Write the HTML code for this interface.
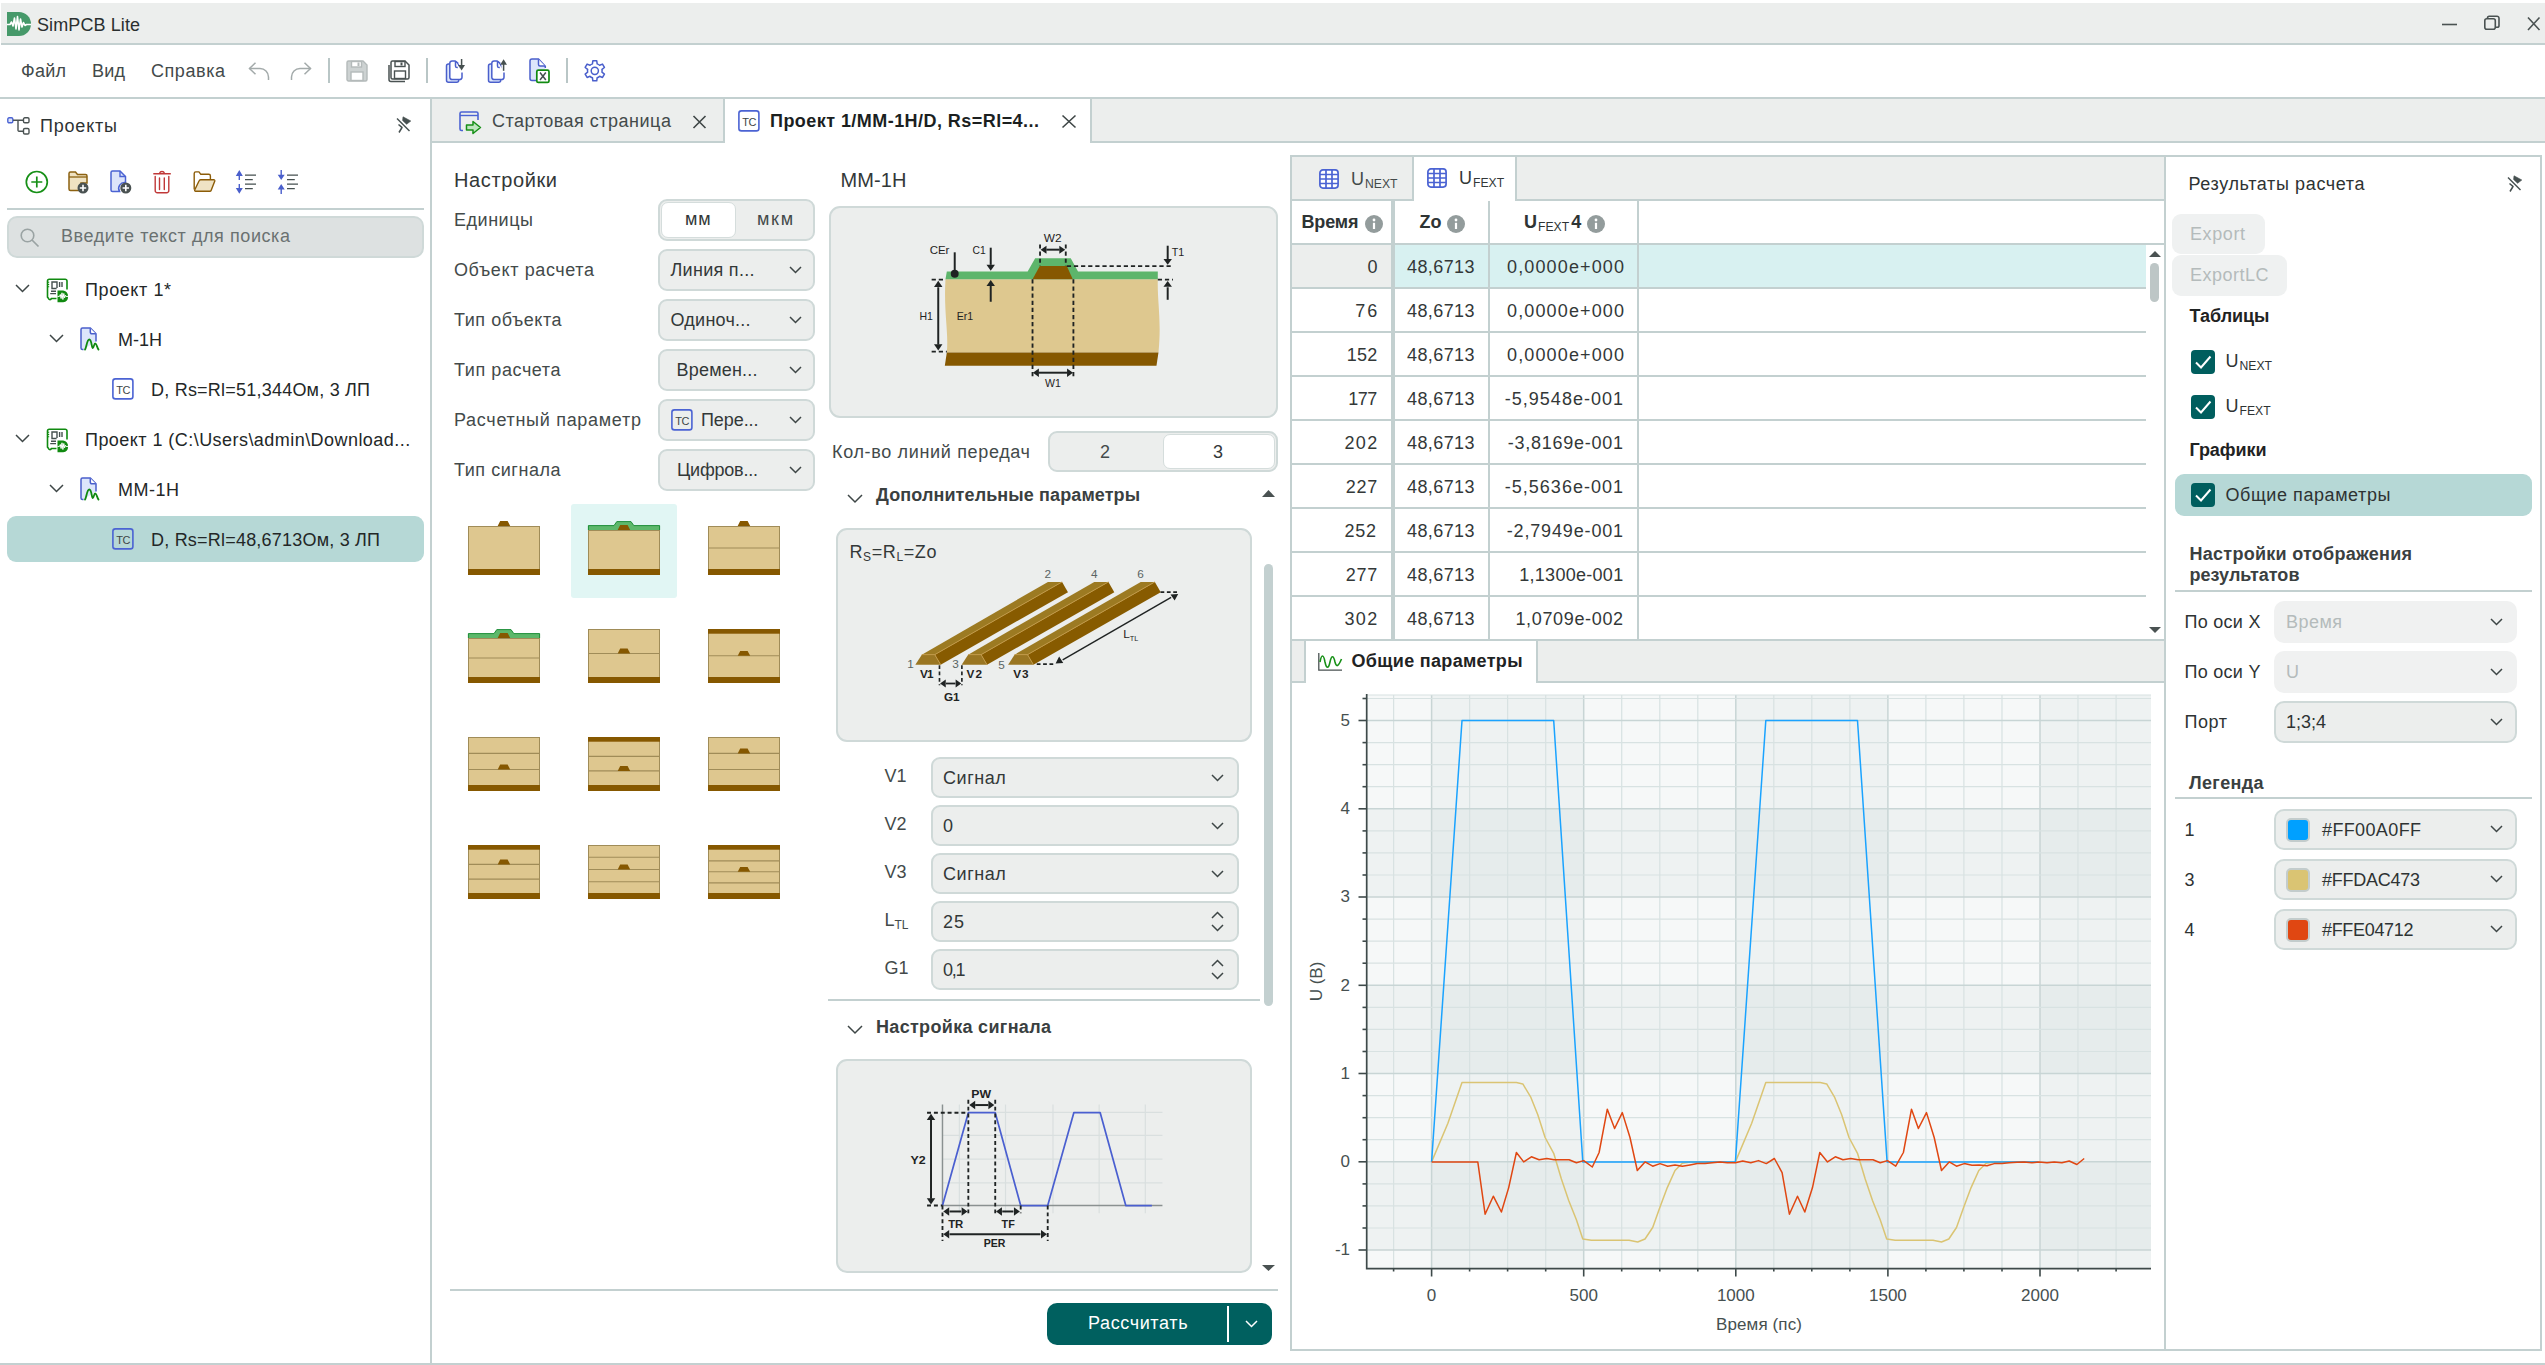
<!DOCTYPE html>
<html><head><meta charset="utf-8">
<style>
*{box-sizing:border-box;margin:0;padding:0}
html,body{width:2545px;height:1365px;overflow:hidden;background:#fff}
body{position:relative;font-family:"Liberation Sans",sans-serif;color:#232727;font-size:18px}
.a{position:absolute}
.t{position:absolute;white-space:nowrap;line-height:1}
.bd{background:#c3d0d0}
.gray{background:#eceeed}
svg{position:absolute;overflow:visible}
.dd{position:absolute;background:#eceeed;border:2px solid #cfd9d8;border-radius:9px}
.b{font-weight:bold}
</style></head><body>
<!-- ============ CHROME ============ -->
<div class="a gray" style="left:1px;top:3px;width:2544px;height:40px"></div>
<div class="a bd" style="left:1px;top:43px;width:2544px;height:2px"></div>
<div class="a bd" style="left:0;top:97px;width:2545px;height:2px"></div>
<div class="a bd" style="left:430px;top:99px;width:2px;height:1266px"></div>
<div class="a bd" style="left:0;top:1363px;width:2545px;height:2px"></div>

<!-- logo -->
<svg style="left:7px;top:12px" width="24" height="24" viewBox="0 0 24 24">
<path d="M0 0H12A12 12 0 0 1 12 24H0Z" fill="#46996a"></path>
<path d="M0 12.5H3L4.5 10L6 14L7.5 6L9 17L10.5 4.5L12 18L13.5 7L15 15L16.5 10.5L18 13.5L19.5 12.5H24" fill="none" stroke="#fff" stroke-width="1.6" stroke-linejoin="round"></path>
</svg>
<div class="t" style="left: 37px; top: 16px; font-size: 18px; color: rgb(42, 47, 47); letter-spacing: 0.1px;">SimPCB Lite</div>

<!-- window controls -->
<svg style="left:2440px;top:14px" width="104" height="20" viewBox="0 0 104 20">
<path d="M2 10.5H17" stroke="#4a5252" stroke-width="1.6"></path>
<rect x="44.8" y="4.8" width="10.5" height="10.5" rx="2" fill="none" stroke="#4a5252" stroke-width="1.6"></rect>
<path d="M47.5 4.8V4A1.8 1.8 0 0 1 49.3 2.2H57A2 2 0 0 1 59 4.2V11.5A1.8 1.8 0 0 1 57.2 13.3H55.3" fill="none" stroke="#4a5252" stroke-width="1.6"></path>
<path d="M88 3.5L99.5 16M99.5 3.5L88 16" stroke="#4a5252" stroke-width="1.6"></path>
</svg>

<!-- ============ MENU ============ -->
<div class="t" style="left: 21px; top: 62px; color: rgb(67, 74, 74); letter-spacing: 0.24px;">Файл</div>
<div class="t" style="left: 92px; top: 62px; color: rgb(67, 74, 74); letter-spacing: 0.21px;">Вид</div>
<div class="t" style="left: 151px; top: 62px; color: rgb(67, 74, 74); letter-spacing: 0.56px;">Справка</div>
<!-- undo/redo -->
<svg style="left:248px;top:62px" width="22" height="18" viewBox="0 0 22 18">
<path d="M1.5 6.5H12A8.5 8.5 0 0 1 20.5 15V18" fill="none" stroke="#a3aaaa" stroke-width="1.5"></path>
<path d="M7.5 0.8L1.5 6.5L7.5 12.2" fill="none" stroke="#a3aaaa" stroke-width="1.5"></path>
</svg>
<svg style="left:290px;top:62px" width="22" height="18" viewBox="0 0 22 18">
<path d="M20.5 6.5H10A8.5 8.5 0 0 0 1.5 15V18" fill="none" stroke="#a3aaaa" stroke-width="1.5"></path>
<path d="M14.5 0.8L20.5 6.5L14.5 12.2" fill="none" stroke="#a3aaaa" stroke-width="1.5"></path>
</svg>
<div class="a" style="left:328px;top:58px;width:2px;height:25px;background:#b9c6c6"></div>
<div class="a" style="left:426px;top:58px;width:2px;height:25px;background:#b9c6c6"></div>
<div class="a" style="left:566px;top:58px;width:2px;height:25px;background:#b9c6c6"></div>
<!-- save disabled -->
<svg style="left:346px;top:60px" width="22" height="22" viewBox="0 0 22 22">
<path d="M2.5 1H17L21 5V19.5A1.5 1.5 0 0 1 19.5 21H2.5A1.5 1.5 0 0 1 1 19.5V2.5A1.5 1.5 0 0 1 2.5 1Z" fill="#cdd2d2" stroke="#b4baba" stroke-width="1.4"></path>
<rect x="5.5" y="1.5" width="10" height="5.5" fill="#fff" stroke="#b4baba" stroke-width="1.4"></rect>
<rect x="11.5" y="2.5" width="2" height="3.5" fill="#b4baba"></rect>
<rect x="5" y="12" width="12" height="8.5" fill="#fff" stroke="#b4baba" stroke-width="1.4"></rect>
</svg>
<!-- save all -->
<svg style="left:388px;top:60px" width="22" height="22" viewBox="0 0 22 22">
<path d="M4.5 1H17L21 5V17.5A1.5 1.5 0 0 1 19.5 19H4.5A1.5 1.5 0 0 1 3 17.5V2.5A1.5 1.5 0 0 1 4.5 1Z" fill="#fff" stroke="#4a5252" stroke-width="1.5"></path>
<path d="M1 5V19.5A2 2 0 0 0 3 21.5H17" fill="none" stroke="#4a5252" stroke-width="1.5"></path>
<rect x="7" y="1.5" width="10" height="5" fill="#fff" stroke="#4a5252" stroke-width="1.4"></rect>
<rect x="12.5" y="2.5" width="2" height="3" fill="#4a5252"></rect>
<rect x="6.5" y="11" width="11" height="7.5" fill="#fff" stroke="#4a5252" stroke-width="1.4"></rect>
</svg>
<!-- import -->
<svg style="left:440px;top:55px" width="30" height="30" viewBox="0 0 30 30">
<rect x="6.5" y="9" width="12.2" height="18.3" rx="2" fill="#dde6fb" stroke="#4a5fcc" stroke-width="1.5"></rect>
<path d="M15.8 6H12A2.2 2.2 0 0 0 9.8 8.2V22.3A2.2 2.2 0 0 0 12 24.5H19.8A2.2 2.2 0 0 0 22 22.3V17.5" fill="#fff" stroke="#4a5fcc" stroke-width="1.5"></path>
<path d="M15.8 6.3L18.3 8.6M15.5 6V11A1.6 1.6 0 0 0 17.1 12.6H17.8" fill="none" stroke="#4a5fcc" stroke-width="1.5"></path>
<path d="M21.6 4V11" stroke="#465050" stroke-width="1.5"></path><path d="M18.2 10H25L21.6 15.5Z" fill="#465050"></path>
</svg>
<!-- export -->
<svg style="left:482px;top:55px" width="30" height="30" viewBox="0 0 30 30">
<rect x="6.5" y="9" width="12.2" height="18.3" rx="2" fill="#dde6fb" stroke="#4a5fcc" stroke-width="1.5"></rect>
<path d="M15.8 6H12A2.2 2.2 0 0 0 9.8 8.2V22.3A2.2 2.2 0 0 0 12 24.5H19.8A2.2 2.2 0 0 0 22 22.3V17.5" fill="#fff" stroke="#4a5fcc" stroke-width="1.5"></path>
<path d="M15.8 6.3L18.3 8.6M15.5 6V11A1.6 1.6 0 0 0 17.1 12.6H17.8" fill="none" stroke="#4a5fcc" stroke-width="1.5"></path>
<path d="M21.6 9V15.8" stroke="#465050" stroke-width="1.5"></path><path d="M18.2 9.7H25L21.6 4.2Z" fill="#465050"></path>
</svg>
<!-- excel -->
<svg style="left:524px;top:55px" width="30" height="30" viewBox="0 0 30 30">
<path d="M14.3 25.5H8A2 2 0 0 1 6 23.5V6A2 2 0 0 1 8 4H14.5L21.3 11.2V13" fill="#dde6fb" stroke="#4a5fcc" stroke-width="1.5"></path>
<path d="M14.5 4.2V9.5A1.5 1.5 0 0 0 16 11H21" fill="#fff" stroke="#4a5fcc" stroke-width="1.5"></path>
<rect x="12.8" y="15.2" width="12.2" height="12.2" rx="1.5" fill="#fff" stroke="#108a10" stroke-width="1.7"></rect>
<path d="M16 17.5L21.8 25M21.8 17.5L16 25" stroke="#465050" stroke-width="1.5"></path>
</svg>
<!-- gear -->
<svg style="left:580px;top:55px" width="30" height="30" viewBox="0 0 30 30">
<path d="M12.42 8.90L12.85 5.79L16.75 5.79L17.18 8.90A7.3 7.3 0 0 1 19.59 10.29L22.50 9.11L24.44 12.48L21.97 14.41A7.3 7.3 0 0 1 21.97 17.19L24.44 19.12L22.50 22.49L19.59 21.31A7.3 7.3 0 0 1 17.18 22.70L16.75 25.81L12.85 25.81L12.42 22.70A7.3 7.3 0 0 1 10.01 21.31L7.10 22.49L5.16 19.12L7.63 17.19A7.3 7.3 0 0 1 7.63 14.41L5.16 12.48L7.10 9.11L10.01 10.29A7.3 7.3 0 0 1 12.42 8.90Z" fill="none" stroke="#4a5fcc" stroke-width="1.5" stroke-linejoin="round"></path>
<circle cx="14.8" cy="15.8" r="3.6" fill="none" stroke="#4a5fcc" stroke-width="1.5"></circle>
</svg>

<!-- ============ LEFT PANEL ============ -->
<svg style="left:7px;top:117px" width="23" height="18" viewBox="0 0 23 18">
<rect x="0.8" y="0.8" width="5" height="5" rx="1.3" fill="#dde4fa" stroke="#4b63d3" stroke-width="1.4"></rect>
<rect x="16.5" y="0.8" width="5.5" height="5" rx="1.3" fill="none" stroke="#4a5252" stroke-width="1.4"></rect>
<rect x="16.5" y="11.5" width="5.5" height="5.5" rx="1.3" fill="none" stroke="#4a5252" stroke-width="1.4"></rect>
<path d="M6 3.3H16.5M11 3.3V13A1 1 0 0 0 12 14.2H16.5" fill="none" stroke="#4a5252" stroke-width="1.4"></path>
</svg>
<div class="t" style="left: 40px; top: 117px; color: rgb(46, 51, 51); letter-spacing: 0.79px;">Проекты</div>
<svg style="left:396px;top:116px" width="17" height="18" viewBox="12 9.5 17 18"><path d="M13 12L25.5 24.5" stroke="#465050" stroke-width="1.4"></path><path d="M19 10.3L26.8 14.5L22.6 17.8L18.6 14Z" fill="#465050" stroke="#465050" stroke-width="0.6" stroke-linejoin="round"></path><path d="M14.5 18L18.5 21.3M18 21L15 26" stroke="#465050" stroke-width="1.5"></path></svg>
<!-- toolbar icons -->
<svg style="left:25px;top:170px" width="24" height="24" viewBox="0 0 24 24">
<circle cx="11.8" cy="12" r="10.5" fill="none" stroke="#179017" stroke-width="1.7"></circle>
<path d="M11.8 6.5V17.5M6.3 12H17.3" stroke="#179017" stroke-width="1.7"></path>
</svg>
<svg style="left:68px;top:171px" width="22" height="23" viewBox="0 0 22 23">
<path d="M1 2.5A1.5 1.5 0 0 1 2.5 1H7.5L9.5 3.5H17.5A1.5 1.5 0 0 1 19 5V12H13V19.5H2.5A1.5 1.5 0 0 1 1 18Z" fill="#efe2c2" stroke="#8c6212" stroke-width="1.5"></path>
<path d="M1 6H19" stroke="#8c6212" stroke-width="1.3"></path>
<circle cx="15" cy="17" r="5.5" fill="#4a5252"></circle>
<path d="M15 13.8V20.2M11.8 17H18.2" stroke="#fff" stroke-width="1.6"></path>
</svg>
<svg style="left:110px;top:170px" width="22" height="24" viewBox="0 0 22 24">
<path d="M2.5 1H10L15.5 6.5V12.5A6 6 0 0 0 9.5 21.5H2.5A1.5 1.5 0 0 1 1 20V2.5A1.5 1.5 0 0 1 2.5 1Z" fill="#dde4fa" stroke="#4b63d3" stroke-width="1.5"></path>
<path d="M10 1V6.5H15.5" fill="none" stroke="#4b63d3" stroke-width="1.4"></path>
<circle cx="15.8" cy="18" r="5.5" fill="#4a5252"></circle>
<path d="M15.8 14.8V21.2M12.6 18H19" stroke="#fff" stroke-width="1.6"></path>
</svg>
<svg style="left:148px;top:165px" width="156" height="35" viewBox="0 0 156 35">
<path d="M5.3 8.7H22.8M11.6 8.2A2.5 2.3 0 0 1 16.4 8.2" fill="none" stroke="#c03838" stroke-width="1.4"></path>
<path d="M7.2 11.5V25.5A2.2 2.2 0 0 0 9.4 27.8H18.6A2.2 2.2 0 0 0 20.8 25.5V11.5M11.5 13V24.5M16.3 13V24.5" fill="none" stroke="#c03838" stroke-width="1.4" stroke-linecap="round"></path>
<path d="M46.2 24.5V8.5A1.6 1.6 0 0 1 47.8 6.9H51L52.8 9.3H60.8A1.6 1.6 0 0 1 62.4 10.9V14.5" fill="#fff" stroke="#8c5c08" stroke-width="1.4" stroke-linejoin="round"></path>
<path d="M51 16A1.8 1.8 0 0 1 52.7 14.8H65.8A1 1 0 0 1 66.8 16L63.2 25.2A1.6 1.6 0 0 1 61.7 26.3H47.6A1 1 0 0 1 46.7 25Z" fill="#efe3c5" stroke="#8c5c08" stroke-width="1.4" stroke-linejoin="round"></path>
<path d="M91.3 10V15M91.3 19V24" stroke="#4a5fcc" stroke-width="1.4"></path>
<path d="M87.8 11H94.8L91.3 5ZM87.8 23H94.8L91.3 28.8Z" fill="#4a5fcc"></path>
<path d="M97 10.2H108M97 14.6H104.8M97 19.2H108M97 23.6H104.8" stroke="#465050" stroke-width="1.3"></path>
<path d="M133.2 5V10.5M133.2 24V29" stroke="#4a5fcc" stroke-width="1.4"></path>
<path d="M129.7 9.8H136.7L133.2 15ZM129.7 24.5H136.7L133.2 19Z" fill="#4a5fcc"></path>
<path d="M139 10.2H150M139 14.6H146.8M139 19.2H150M139 23.6H146.8" stroke="#465050" stroke-width="1.3"></path>
</svg>
<div class="a bd" style="left:7px;top:208px;width:417px;height:2px"></div>
<div class="a" style="left:7px;top:216px;width:417px;height:42px;background:#dde1e1;border:2px solid #cfd9d8;border-radius:10px"></div>
<svg style="left:20px;top:228px" width="20" height="20" viewBox="0 0 20 20">
<circle cx="7.5" cy="7.5" r="6.3" fill="none" stroke="#9aa3a3" stroke-width="1.6"></circle>
<path d="M12 12L18.5 18.5" stroke="#9aa3a3" stroke-width="1.7"></path>
</svg>
<div class="t" style="left: 61px; top: 227px; color: rgb(106, 113, 113); letter-spacing: 0.57px;">Введите текст для поиска</div>

<!-- tree -->
<svg style="left:15px;top:284px" width="15" height="9" viewBox="0 0 15 9"><path d="M1 1L7.5 7.5L14 1" fill="none" stroke="#3e4646" stroke-width="1.5"></path></svg>
<svg style="left:46px;top:278px" width="24" height="24" viewBox="0 0 24 24">
<path d="M10.5 20.5H5.2A1.2 1.2 0 0 1 4 21.7A1.5 1.5 0 0 1 2.5 20.3L1.8 19.6A1 1 0 0 1 1.5 18.9V3A1.8 1.8 0 0 1 3.3 1.2H19.2A1.8 1.8 0 0 1 21 3V11.5" fill="none" stroke="#108a10" stroke-width="1.6" stroke-linejoin="round"></path>
<path d="M1.5 4.3H3.2M1.5 6.5H3.2M1.5 8.7H3.2" stroke="#108a10" stroke-width="1.1"></path>
<path d="M10.6 10.5H6V4H11V10" fill="none" stroke="#465050" stroke-width="1.4"></path>
<path d="M13.6 4V9M16 4V9M5 13.2H10M4.2 15.6H10" stroke="#465050" stroke-width="1.4"></path>
<path d="M11.5 12.5H17.2A6 6 0 0 1 17.2 24.3H11.5Z" fill="#108a10"></path>
<path d="M11.5 18.4H13.5L14.3 16.5L15.1 20.5L16 14.8L16.9 21.5L17.8 15.5L18.6 19.8L19.4 17.3L20.1 18.4H23" fill="none" stroke="#fff" stroke-width="1"></path>
</svg>
<div class="t" style="left: 85px; top: 281px; letter-spacing: 0.59px;">Проект 1*</div>

<svg style="left:49px;top:334px" width="15" height="9" viewBox="0 0 15 9"><path d="M1 1L7.5 7.5L14 1" fill="none" stroke="#3e4646" stroke-width="1.5"></path></svg>
<svg style="left:79.5px;top:326.5px" width="20" height="24" viewBox="0 0 20 24">
<path d="M3.5 22.5H2.5A1.5 1.5 0 0 1 1 21V2.5A1.5 1.5 0 0 1 2.5 1H10.3L16 6.8V14.5" fill="#dde6fb" stroke="#4a5fcc" stroke-width="1.5"></path>
<path d="M10.3 1.2V5.3A1.5 1.5 0 0 0 11.8 6.8H15.8" fill="#fff" stroke="#4a5fcc" stroke-width="1.5"></path>
<path d="M5 22.5C6.5 21 6.8 12.5 9.3 12.5C11.8 12.5 11.5 21 12.8 21C14 21 13.8 16.5 15.2 16.5C16.8 16.5 17 21 18.5 22.5" fill="none" stroke="#108a10" stroke-width="1.8" stroke-linecap="round"></path>
</svg>
<div class="t" style="left: 118px; top: 331px; letter-spacing: 0px;">М-1Н</div>

<svg style="left:112px;top:378px" width="22" height="22" viewBox="0 0 22 22">
<rect x="0.9" y="0.9" width="20" height="20" rx="2.5" fill="none" stroke="#4b63d3" stroke-width="1.6"></rect>
<text x="11" y="15.5" font-family="Liberation Sans" font-size="11" fill="#3e4646" text-anchor="middle" letter-spacing="-0.6">TC</text>
</svg>
<div class="t" style="left: 151px; top: 381px; letter-spacing: 0.22px;">D, Rs=Rl=51,344Ом, 3 ЛП</div>

<svg style="left:15px;top:434px" width="15" height="9" viewBox="0 0 15 9"><path d="M1 1L7.5 7.5L14 1" fill="none" stroke="#3e4646" stroke-width="1.5"></path></svg>
<svg style="left:46px;top:428px" width="24" height="24" viewBox="0 0 24 24">
<path d="M10.5 20.5H5.2A1.2 1.2 0 0 1 4 21.7A1.5 1.5 0 0 1 2.5 20.3L1.8 19.6A1 1 0 0 1 1.5 18.9V3A1.8 1.8 0 0 1 3.3 1.2H19.2A1.8 1.8 0 0 1 21 3V11.5" fill="none" stroke="#108a10" stroke-width="1.6" stroke-linejoin="round"></path>
<path d="M1.5 4.3H3.2M1.5 6.5H3.2M1.5 8.7H3.2" stroke="#108a10" stroke-width="1.1"></path>
<path d="M10.6 10.5H6V4H11V10" fill="none" stroke="#465050" stroke-width="1.4"></path>
<path d="M13.6 4V9M16 4V9M5 13.2H10M4.2 15.6H10" stroke="#465050" stroke-width="1.4"></path>
<path d="M11.5 12.5H17.2A6 6 0 0 1 17.2 24.3H11.5Z" fill="#108a10"></path>
<path d="M11.5 18.4H13.5L14.3 16.5L15.1 20.5L16 14.8L16.9 21.5L17.8 15.5L18.6 19.8L19.4 17.3L20.1 18.4H23" fill="none" stroke="#fff" stroke-width="1"></path>
</svg>
<div class="t" style="left: 85px; top: 431px; letter-spacing: 0.45px;">Проект 1 (C:\Users\admin\Download...</div>

<svg style="left:49px;top:484px" width="15" height="9" viewBox="0 0 15 9"><path d="M1 1L7.5 7.5L14 1" fill="none" stroke="#3e4646" stroke-width="1.5"></path></svg>
<svg style="left:79.5px;top:476.5px" width="20" height="24" viewBox="0 0 20 24">
<path d="M3.5 22.5H2.5A1.5 1.5 0 0 1 1 21V2.5A1.5 1.5 0 0 1 2.5 1H10.3L16 6.8V14.5" fill="#dde6fb" stroke="#4a5fcc" stroke-width="1.5"></path>
<path d="M10.3 1.2V5.3A1.5 1.5 0 0 0 11.8 6.8H15.8" fill="#fff" stroke="#4a5fcc" stroke-width="1.5"></path>
<path d="M5 22.5C6.5 21 6.8 12.5 9.3 12.5C11.8 12.5 11.5 21 12.8 21C14 21 13.8 16.5 15.2 16.5C16.8 16.5 17 21 18.5 22.5" fill="none" stroke="#108a10" stroke-width="1.8" stroke-linecap="round"></path>
</svg>
<div class="t" style="left: 118px; top: 481px; letter-spacing: 0.5px;">ММ-1Н</div>

<div class="a" style="left:7px;top:516px;width:417px;height:46px;background:#b6d8d6;border-radius:9px"></div>
<svg style="left:112px;top:528px" width="22" height="22" viewBox="0 0 22 22">
<rect x="0.9" y="0.9" width="20" height="20" rx="2.5" fill="none" stroke="#4b63d3" stroke-width="1.6"></rect>
<text x="11" y="15.5" font-family="Liberation Sans" font-size="11" fill="#3e4646" text-anchor="middle" letter-spacing="-0.6">TC</text>
</svg>
<div class="t" style="left: 151px; top: 531px; letter-spacing: 0.21px;">D, Rs=Rl=48,6713Ом, 3 ЛП</div>


<!-- ============ TAB BAR ============ -->
<div class="a gray" style="left:432px;top:99px;width:2113px;height:42px"></div>
<div class="a bd" style="left:432px;top:141px;width:2113px;height:2px"></div>
<div class="a bd" style="left:723px;top:99px;width:2px;height:44px"></div>
<div class="a" style="left:725px;top:99px;width:365px;height:44px;background:#fff"></div>
<div class="a bd" style="left:1090px;top:99px;width:2px;height:44px"></div>
<svg style="left:459px;top:111px" width="25" height="23" viewBox="0 0 25 23">
<path d="M4 19.5H2.5A1.5 1.5 0 0 1 1 18V2.5A1.5 1.5 0 0 1 2.5 1H17.5A1.5 1.5 0 0 1 19 2.5V9" fill="none" stroke="#4b63d3" stroke-width="1.6"></path>
<path d="M1 4.5H19" stroke="#4b63d3" stroke-width="1.4"></path>
<path d="M7.5 14H14V10.5L21.5 16.5L14 22.5V19H7.5Z" fill="#bfe6bf" stroke="#179017" stroke-width="1.5" stroke-linejoin="round"></path>
</svg>
<div class="t" style="left: 492px; top: 112px; color: rgb(67, 74, 74); letter-spacing: 0.5px;">Стартовая страница</div>
<svg style="left:692px;top:115px" width="15" height="14" viewBox="0 0 15 14"><path d="M1.5 1L13.5 13M13.5 1L1.5 13" stroke="#3e4646" stroke-width="1.6"></path></svg>
<svg style="left:738px;top:110px" width="22" height="22" viewBox="0 0 22 22">
<rect x="0.9" y="0.9" width="20" height="20" rx="2.5" fill="none" stroke="#4b63d3" stroke-width="1.6"></rect>
<text x="11" y="15.5" font-family="Liberation Sans" font-size="11" fill="#3e4646" text-anchor="middle" letter-spacing="-0.6">TC</text>
</svg>
<div class="t b" style="left: 770px; top: 112px; color: rgb(27, 31, 31); letter-spacing: 0.45px;">Проект 1/MM-1H/D, Rs=Rl=4...</div>
<svg style="left:1061px;top:114px" width="16" height="15" viewBox="0 0 16 15"><path d="M1.5 1.5L14.5 13.5M14.5 1.5L1.5 13.5" stroke="#3e4646" stroke-width="1.6"></path></svg>


<!--MIDSTART-->
<!-- ============ MIDDLE ============ -->
<div class="t " style="left: 454px; top: 169.5px; font-size: 20px; color: rgb(51, 56, 56); letter-spacing: 0.62px;">Настройки</div>
<div class="t " style="left: 840.5px; top: 170px; font-size: 20px; color: rgb(51, 56, 56); letter-spacing: 0.11px;">MM-1H</div>
<div class="t " style="left: 454px; top: 211px; color: rgb(67, 74, 74); letter-spacing: 0.53px;">Единицы</div>
<div class="t " style="left: 454px; top: 260.6px; color: rgb(67, 74, 74); letter-spacing: 0.62px;">Объект расчета</div>
<div class="t " style="left: 454px; top: 310.6px; color: rgb(67, 74, 74); letter-spacing: 0.54px;">Тип объекта</div>
<div class="t " style="left: 454px; top: 360.6px; color: rgb(67, 74, 74); letter-spacing: 0.58px;">Тип расчета</div>
<div class="t " style="left: 454px; top: 410.6px; color: rgb(67, 74, 74); letter-spacing: 0.7px;">Расчетный параметр</div>
<div class="t " style="left: 454px; top: 461px; color: rgb(67, 74, 74); letter-spacing: 0.54px;">Тип сигнала</div>
<div class="dd" style="left:658px;top:199px;width:157px;height:42px"></div>
<div class="a" style="left:661px;top:202px;width:75px;height:36px;background:#fff;border:1px solid #d5dddc;border-radius:7px"></div>
<div class="t " style="left: 685px; top: 210px; color: rgb(51, 56, 56); letter-spacing: 0.75px;">мм</div>
<div class="t " style="left: 757px; top: 210px; color: rgb(67, 74, 74); letter-spacing: 1.69px;">мкм</div>
<div class="dd" style="left:658px;top:249px;width:157px;height:42px"></div>
<div class="t " style="left: 670.5px; top: 260.6px; color: rgb(51, 56, 56); letter-spacing: 0.29px;">Линия п...</div>
<svg style="left:789px;top:266px" width="13" height="8" viewBox="0 0 13 8"><path d="M1 1L6.5 6.5L12 1" fill="none" stroke="#3e4646" stroke-width="1.5"></path></svg>
<div class="dd" style="left:658px;top:299px;width:157px;height:42px"></div>
<div class="t " style="left: 670.5px; top: 310.6px; color: rgb(51, 56, 56); letter-spacing: 0.24px;">Одиноч...</div>
<svg style="left:789px;top:316px" width="13" height="8" viewBox="0 0 13 8"><path d="M1 1L6.5 6.5L12 1" fill="none" stroke="#3e4646" stroke-width="1.5"></path></svg>
<div class="dd" style="left:658px;top:349px;width:157px;height:42px"></div>
<div class="t " style="left: 676.5px; top: 360.6px; color: rgb(51, 56, 56); letter-spacing: 0.21px;">Времен...</div>
<svg style="left:789px;top:366px" width="13" height="8" viewBox="0 0 13 8"><path d="M1 1L6.5 6.5L12 1" fill="none" stroke="#3e4646" stroke-width="1.5"></path></svg>
<div class="dd" style="left:658px;top:399px;width:157px;height:42px"></div>
<div class="t " style="left: 701px; top: 410.6px; color: rgb(51, 56, 56); letter-spacing: -0.08px;">Пере...</div>
<svg style="left:789px;top:416px" width="13" height="8" viewBox="0 0 13 8"><path d="M1 1L6.5 6.5L12 1" fill="none" stroke="#3e4646" stroke-width="1.5"></path></svg>
<div class="dd" style="left:658px;top:449px;width:157px;height:42px"></div>
<div class="t " style="left: 677px; top: 460.6px; color: rgb(51, 56, 56); letter-spacing: -0.22px;">Цифров...</div>
<svg style="left:789px;top:466px" width="13" height="8" viewBox="0 0 13 8"><path d="M1 1L6.5 6.5L12 1" fill="none" stroke="#3e4646" stroke-width="1.5"></path></svg>
<svg style="left:671px;top:409px" width="22" height="22" viewBox="0 0 22 22"><rect x="0.9" y="0.9" width="20" height="20" rx="2.5" fill="none" stroke="#4b63d3" stroke-width="1.6"></rect><text x="11" y="15.5" font-family="Liberation Sans" font-size="11" fill="#3e4646" text-anchor="middle" letter-spacing="-0.6">TC</text></svg>
<div class="a" style="left:571px;top:504px;width:106px;height:94px;background:#e1f6f4;border-radius:3px"></div>
<svg style="left:468px;top:521px" width="72" height="54" viewBox="0 0 72 54"><rect x="0.5" y="5.5" width="71" height="43" fill="#dec78f" stroke="#a08c58" stroke-width="1"></rect><path d="M29.7 5L32.2 0.09999999999999964H39.6L42.2 5Z" fill="#865800"></path><rect x="0" y="48" width="72" height="6" fill="#865800"></rect></svg>
<svg style="left:588px;top:521px" width="72" height="54" viewBox="0 0 72 54"><rect x="0.5" y="9.5" width="71" height="39" fill="#dec78f" stroke="#a08c58" stroke-width="1"></rect><path d="M0 4.6H26L28.8 0.5H43L45.8 4.6H72V9H0Z" fill="#5db86b"></path><path d="M0.4 9V4.6H26L28.8 0.6H43L45.8 4.6H71.6V9" fill="none" stroke="#1f8f3a" stroke-width="1"></path><path d="M29.7 9L32.2 4.1H39.6L42.2 9Z" fill="#865800"></path><rect x="0" y="48" width="72" height="6" fill="#865800"></rect></svg>
<svg style="left:708px;top:521px" width="72" height="54" viewBox="0 0 72 54"><rect x="0.5" y="5.5" width="71" height="43" fill="#dec78f" stroke="#a08c58" stroke-width="1"></rect><path d="M0.5 27H71.5" stroke="#a08c58" stroke-width="1.1"></path><path d="M29.7 5L32.2 0.09999999999999964H39.6L42.2 5Z" fill="#865800"></path><rect x="0" y="48" width="72" height="6" fill="#865800"></rect></svg>
<svg style="left:468px;top:629px" width="72" height="54" viewBox="0 0 72 54"><rect x="0.5" y="9.5" width="71" height="39" fill="#dec78f" stroke="#a08c58" stroke-width="1"></rect><path d="M0.5 29H71.5" stroke="#a08c58" stroke-width="1.1"></path><path d="M0 4.6H26L28.8 0.5H43L45.8 4.6H72V9H0Z" fill="#5db86b"></path><path d="M0.4 9V4.6H26L28.8 0.6H43L45.8 4.6H71.6V9" fill="none" stroke="#1f8f3a" stroke-width="1"></path><path d="M29.7 9L32.2 4.1H39.6L42.2 9Z" fill="#865800"></path><rect x="0" y="48" width="72" height="6" fill="#865800"></rect></svg>
<svg style="left:588px;top:629px" width="72" height="54" viewBox="0 0 72 54"><rect x="0.5" y="0.5" width="71" height="48" fill="#dec78f" stroke="#a08c58" stroke-width="1"></rect><path d="M0.5 24.5H71.5" stroke="#a08c58" stroke-width="1.1"></path><path d="M29.7 24.5L32.2 19.6H39.6L42.2 24.5Z" fill="#865800"></path><rect x="0" y="48" width="72" height="6" fill="#865800"></rect></svg>
<svg style="left:708px;top:629px" width="72" height="54" viewBox="0 0 72 54"><rect x="0.5" y="0.5" width="71" height="48" fill="#dec78f" stroke="#a08c58" stroke-width="1"></rect><path d="M0.5 26.8H71.5" stroke="#a08c58" stroke-width="1.1"></path><rect x="0" y="0" width="72" height="4.7" fill="#865800"></rect><path d="M29.7 26.8L32.2 21.9H39.6L42.2 26.8Z" fill="#865800"></path><rect x="0" y="48" width="72" height="6" fill="#865800"></rect></svg>
<svg style="left:468px;top:737px" width="72" height="54" viewBox="0 0 72 54"><rect x="0.5" y="0.5" width="71" height="48" fill="#dec78f" stroke="#a08c58" stroke-width="1"></rect><path d="M0.5 16.4H71.5" stroke="#a08c58" stroke-width="1.1"></path><path d="M0.5 32.5H71.5" stroke="#a08c58" stroke-width="1.1"></path><path d="M29.7 32.5L32.2 27.6H39.6L42.2 32.5Z" fill="#865800"></path><rect x="0" y="48" width="72" height="6" fill="#865800"></rect></svg>
<svg style="left:588px;top:737px" width="72" height="54" viewBox="0 0 72 54"><rect x="0.5" y="0.5" width="71" height="48" fill="#dec78f" stroke="#a08c58" stroke-width="1"></rect><path d="M0.5 19.4H71.5" stroke="#a08c58" stroke-width="1.1"></path><path d="M0.5 33.9H71.5" stroke="#a08c58" stroke-width="1.1"></path><rect x="0" y="0" width="72" height="4.7" fill="#865800"></rect><path d="M29.7 33.9L32.2 29.0H39.6L42.2 33.9Z" fill="#865800"></path><rect x="0" y="48" width="72" height="6" fill="#865800"></rect></svg>
<svg style="left:708px;top:737px" width="72" height="54" viewBox="0 0 72 54"><rect x="0.5" y="0.5" width="71" height="48" fill="#dec78f" stroke="#a08c58" stroke-width="1"></rect><path d="M0.5 16.4H71.5" stroke="#a08c58" stroke-width="1.1"></path><path d="M0.5 32.5H71.5" stroke="#a08c58" stroke-width="1.1"></path><path d="M29.7 16.4L32.2 11.499999999999998H39.6L42.2 16.4Z" fill="#865800"></path><rect x="0" y="48" width="72" height="6" fill="#865800"></rect></svg>
<svg style="left:468px;top:845px" width="72" height="54" viewBox="0 0 72 54"><rect x="0.5" y="0.5" width="71" height="48" fill="#dec78f" stroke="#a08c58" stroke-width="1"></rect><path d="M0.5 19.4H71.5" stroke="#a08c58" stroke-width="1.1"></path><path d="M0.5 34.1H71.5" stroke="#a08c58" stroke-width="1.1"></path><rect x="0" y="0" width="72" height="4.7" fill="#865800"></rect><path d="M29.7 19.4L32.2 14.499999999999998H39.6L42.2 19.4Z" fill="#865800"></path><rect x="0" y="48" width="72" height="6" fill="#865800"></rect></svg>
<svg style="left:588px;top:845px" width="72" height="54" viewBox="0 0 72 54"><rect x="0.5" y="0.5" width="71" height="48" fill="#dec78f" stroke="#a08c58" stroke-width="1"></rect><path d="M0.5 12.3H71.5" stroke="#a08c58" stroke-width="1.1"></path><path d="M0.5 24.5H71.5" stroke="#a08c58" stroke-width="1.1"></path><path d="M0.5 36.7H71.5" stroke="#a08c58" stroke-width="1.1"></path><path d="M29.7 24.5L32.2 19.6H39.6L42.2 24.5Z" fill="#865800"></path><rect x="0" y="48" width="72" height="6" fill="#865800"></rect></svg>
<svg style="left:708px;top:845px" width="72" height="54" viewBox="0 0 72 54"><rect x="0.5" y="0.5" width="71" height="48" fill="#dec78f" stroke="#a08c58" stroke-width="1"></rect><path d="M0.5 15.9H71.5" stroke="#a08c58" stroke-width="1.1"></path><path d="M0.5 26.8H71.5" stroke="#a08c58" stroke-width="1.1"></path><path d="M0.5 37.9H71.5" stroke="#a08c58" stroke-width="1.1"></path><rect x="0" y="0" width="72" height="4.7" fill="#865800"></rect><path d="M29.7 26.8L32.2 21.9H39.6L42.2 26.8Z" fill="#865800"></path><rect x="0" y="48" width="72" height="6" fill="#865800"></rect></svg>
<div class="a" style="left:829px;top:206px;width:449px;height:212px;background:#eceeed;border:2px solid #cfd9d8;border-radius:11px"></div>
<svg style="left:900px;top:220px" width="300" height="180" viewBox="0 0 2275 1365"><path d="M345 450H1955C1950 620 1985 760 1960 1005H355C370 850 330 700 345 450Z" fill="#dec88f"></path><path d="M355 1005H1960L1945 1105H340Z" fill="#865800"></path><path d="M355 390H968L1025 290H1295L1350 390H1955V450H345Z" fill="#5db56b"></path><path d="M1005 450L1060 348H1265L1310 450Z" fill="#865800"></path><circle cx="415" cy="408" r="30" fill="#1f2323"></circle><path d="M415 245V400" stroke="#1f2323" stroke-width="15" fill="none"></path><path d="M688 210V340" stroke="#1f2323" stroke-width="15" fill="none"></path><path d="M656 340.0H720L688 385Z" fill="#1f2323"></path><path d="M688 500V620" stroke="#1f2323" stroke-width="15" fill="none"></path><path d="M656 500.0H720L688 455Z" fill="#1f2323"></path><path d="M1062 185V348M1257 185V348" stroke="#1f2323" stroke-width="14" stroke-dasharray="32 22" fill="none"></path><path d="M1110 225H1210" stroke="#1f2323" stroke-width="15" fill="none"></path><path d="M1111.0 195V255L1066 225Z" fill="#1f2323"></path><path d="M1208.0 195V255L1253 225Z" fill="#1f2323"></path><path d="M1265 350H2070M1955 452H2070" stroke="#1f2323" stroke-width="14" stroke-dasharray="32 22" fill="none"></path><path d="M2030 195V300" stroke="#1f2323" stroke-width="15" fill="none"></path><path d="M1998 295.0H2062L2030 340Z" fill="#1f2323"></path><path d="M2030 510V605" stroke="#1f2323" stroke-width="15" fill="none"></path><path d="M1998 507.0H2062L2030 462Z" fill="#1f2323"></path><path d="M240 452H345M240 998H355" stroke="#1f2323" stroke-width="14" stroke-dasharray="32 22" fill="none"></path><path d="M290 510V945" stroke="#1f2323" stroke-width="15" fill="none"></path><path d="M258 508.0H322L290 460Z" fill="#1f2323"></path><path d="M258 942.0H322L290 990Z" fill="#1f2323"></path><path d="M1005 450V1205M1315 450V1205" stroke="#1f2323" stroke-width="14" stroke-dasharray="32 22" fill="none"></path><path d="M1050 1158H1270" stroke="#1f2323" stroke-width="15" fill="none"></path><path d="M1053.0 1126V1190L1008 1158Z" fill="#1f2323"></path><path d="M1267.0 1126V1190L1312 1158Z" fill="#1f2323"></path><text x="225" y="255" font-family="Liberation Sans" font-size="86" fill="#1f2323" lengthAdjust="spacingAndGlyphs" textLength="150">CEr</text><text x="550" y="255" font-family="Liberation Sans" font-size="86" fill="#1f2323" lengthAdjust="spacingAndGlyphs" textLength="100">C1</text><text x="1090" y="170" font-family="Liberation Sans" font-size="86" fill="#1f2323" lengthAdjust="spacingAndGlyphs" textLength="135">W2</text><text x="2060" y="270" font-family="Liberation Sans" font-size="86" fill="#1f2323" lengthAdjust="spacingAndGlyphs" textLength="95">T1</text><text x="148" y="755" font-family="Liberation Sans" font-size="86" fill="#1f2323" lengthAdjust="spacingAndGlyphs" textLength="102">H1</text><text x="430" y="755" font-family="Liberation Sans" font-size="86" fill="#1f2323" lengthAdjust="spacingAndGlyphs" textLength="125">Er1</text><text x="1100" y="1270" font-family="Liberation Sans" font-size="86" fill="#1f2323" lengthAdjust="spacingAndGlyphs" textLength="120">W1</text></svg>
<div class="t " style="left: 832px; top: 442.5px; color: rgb(67, 74, 74); letter-spacing: 0.66px;">Кол-во линий передач</div>
<div class="dd" style="left:1048px;top:431px;width:230px;height:41px"></div>
<div class="a" style="left:1163px;top:434px;width:112px;height:35px;background:#fff;border:1px solid #d5dddc;border-radius:7px"></div>
<div class="t " style="left:1100px;top:442.5px;color:#434a4a">2</div>
<div class="t " style="left:1213px;top:442.5px;color:#333838">3</div>
<svg style="left:847px;top:494px" width="16" height="9" viewBox="0 0 16 9"><path d="M1 1L8 8L15 1" fill="none" stroke="#3e4646" stroke-width="1.5"></path></svg>
<div class="t b" style="left: 876px; top: 486px; color: rgb(58, 64, 64); letter-spacing: 0.11px;">Дополнительные параметры</div>
<svg style="left:1262px;top:490px" width="13" height="7" viewBox="0 0 13 7"><path d="M0 7L6.5 0L13 7Z" fill="#4a5252"></path></svg>
<div class="a" style="left:1264px;top:564px;width:9px;height:442px;background:#c3d0d0;border-radius:5px"></div>
<div class="a" style="left:836px;top:528px;width:416px;height:214px;background:#eceeed;border:2px solid #cfd9d8;border-radius:11px"></div>
<div class="t" style="left:849.5px;top:543px;color:#333838;font-size:18px;letter-spacing:0.6px">R<span style="font-size:12px;position:relative;top:3px">S</span>=R<span style="font-size:12px;position:relative;top:3px">L</span>=Zo</div>
<svg style="left:900px;top:555px" width="300" height="160" viewBox="0 0 2545 1357"><path d="M130 930L185 845H295L345 930Z" fill="#9a7622"></path><path d="M185 845L1255 228H1375L295 845Z" fill="#9c7a22"></path><path d="M295 845L1375 228L1425 315L345 930Z" fill="#875b00"></path><path d="M295 845L1375 228M185 845H295L345 930" stroke="#c29a48" stroke-width="8" fill="none"></path><path d="M523 930L578 845H688L738 930Z" fill="#9a7622"></path><path d="M578 845L1648 228H1768L688 845Z" fill="#9c7a22"></path><path d="M688 845L1768 228L1818 315L738 930Z" fill="#875b00"></path><path d="M688 845L1768 228M578 845H688L738 930" stroke="#c29a48" stroke-width="8" fill="none"></path><path d="M917 930L972 845H1082L1132 930Z" fill="#9a7622"></path><path d="M972 845L2042 228H2162L1082 845Z" fill="#9c7a22"></path><path d="M1082 845L2162 228L2212 315L1132 930Z" fill="#875b00"></path><path d="M1082 845L2162 228M972 845H1082L1132 930" stroke="#c29a48" stroke-width="8" fill="none"></path><path d="M1160 925H1320M2210 315H2370M335 935V1105M525 935V1105" stroke="#1f2323" stroke-width="14" stroke-dasharray="32 22" fill="none"></path><path d="M1380 890L2300 360" stroke="#1f2323" stroke-width="12"></path><path d="M1320 920L1385 915L1350 860Z M2360 330L2330 385L2295 335Z" fill="#1f2323"></path><path d="M390 1090H470" stroke="#1f2323" stroke-width="15" fill="none"></path><path d="M388.0 1056V1124L340 1090Z" fill="#1f2323"></path><path d="M472.0 1056V1124L520 1090Z" fill="#1f2323"></path><text x="62" y="958" font-family="Liberation Sans" font-size="100" fill="#5a6464">1</text><text x="1225" y="193" font-family="Liberation Sans" font-size="100" fill="#5a6464">2</text><text x="443" y="955" font-family="Liberation Sans" font-size="100" fill="#5a6464">3</text><text x="1620" y="193" font-family="Liberation Sans" font-size="100" fill="#5a6464">4</text><text x="833" y="963" font-family="Liberation Sans" font-size="100" fill="#5a6464">5</text><text x="2013" y="193" font-family="Liberation Sans" font-size="100" fill="#5a6464">6</text><text x="170" y="1045" font-family="Liberation Sans" font-size="100" font-weight="bold" fill="#1f2323" textLength="115">V1</text><text x="565" y="1045" font-family="Liberation Sans" font-size="100" font-weight="bold" fill="#1f2323" textLength="130">V2</text><text x="960" y="1045" font-family="Liberation Sans" font-size="100" font-weight="bold" fill="#1f2323" textLength="130">V3</text><text x="373" y="1238" font-family="Liberation Sans" font-size="100" font-weight="bold" fill="#1f2323">G1</text><text x="1893" y="705" font-family="Liberation Sans" font-size="100" fill="#1f2323">L<tspan font-size="62" dy="22">TL</tspan></text></svg>
<div class="t " style="left:884.5px;top:767px;color:#434a4a">V1</div>
<div class="dd" style="left:931px;top:757px;width:308px;height:41px"></div>
<div class="t " style="left: 943px; top: 768.5px; color: rgb(51, 56, 56); letter-spacing: 0.54px;">Сигнал</div>
<svg style="left:1211px;top:773.5px" width="13" height="8" viewBox="0 0 13 8"><path d="M1 1L6.5 6.5L12 1" fill="none" stroke="#3e4646" stroke-width="1.5"></path></svg>
<div class="t " style="left:884.5px;top:815px;color:#434a4a">V2</div>
<div class="dd" style="left:931px;top:805px;width:308px;height:41px"></div>
<div class="t " style="left:943px;top:816.5px;color:#333838">0</div>
<svg style="left:1211px;top:821.5px" width="13" height="8" viewBox="0 0 13 8"><path d="M1 1L6.5 6.5L12 1" fill="none" stroke="#3e4646" stroke-width="1.5"></path></svg>
<div class="t " style="left:884.5px;top:863px;color:#434a4a">V3</div>
<div class="dd" style="left:931px;top:853px;width:308px;height:41px"></div>
<div class="t " style="left: 943px; top: 864.5px; color: rgb(51, 56, 56); letter-spacing: 0.54px;">Сигнал</div>
<svg style="left:1211px;top:869.5px" width="13" height="8" viewBox="0 0 13 8"><path d="M1 1L6.5 6.5L12 1" fill="none" stroke="#3e4646" stroke-width="1.5"></path></svg>
<div class="t" style="left:884.5px;top:911px;color:#434a4a">L<span style="font-size:12px;position:relative;top:3px">TL</span></div>
<div class="dd" style="left:931px;top:901px;width:308px;height:41px"></div>
<div class="t " style="left: 943px; top: 912.5px; color: rgb(51, 56, 56); letter-spacing: 0.97px;">25</div>
<svg style="left:1211px;top:911px" width="13" height="21" viewBox="0 0 13 21"><path d="M1 7L6.5 1.5L12 7M1 14L6.5 19.5L12 14" fill="none" stroke="#3e4646" stroke-width="1.5"></path></svg>
<div class="t " style="left:884.5px;top:959px;color:#434a4a">G1</div>
<div class="dd" style="left:931px;top:949px;width:308px;height:41px"></div>
<div class="t " style="left: 943px; top: 960.5px; color: rgb(51, 56, 56); letter-spacing: -1.27px;">0,1</div>
<svg style="left:1211px;top:959px" width="13" height="21" viewBox="0 0 13 21"><path d="M1 7L6.5 1.5L12 7M1 14L6.5 19.5L12 14" fill="none" stroke="#3e4646" stroke-width="1.5"></path></svg>
<div class="a bd" style="left:828px;top:999px;width:432px;height:2px"></div>
<svg style="left:847px;top:1025px" width="16" height="9" viewBox="0 0 16 9"><path d="M1 1L8 8L15 1" fill="none" stroke="#3e4646" stroke-width="1.5"></path></svg>
<div class="t b" style="left: 876px; top: 1017.5px; color: rgb(58, 64, 64); letter-spacing: 0.32px;">Настройка сигнала</div>
<div class="a" style="left:836px;top:1059px;width:416px;height:214px;background:#eceeed;border:2px solid #cfd9d8;border-radius:11px"></div>
<svg style="left:900px;top:1080px" width="280" height="180" viewBox="0 0 2123 1365"><path d="M450 185V1010M800 185V1010M1160 185V1010M1510 185V1010M1860 185V1010M325 245H1990M325 420H1990M325 600H1990M325 780H1990" stroke="#d9dfdf" stroke-width="9"></path><path d="M322 185V952H1990" stroke="#8a9191" stroke-width="11" fill="none"></path><path d="M322 952L518 248H722L915 952H1120L1318 248H1518L1712 952H1910" stroke="#4a5fd0" stroke-width="13" fill="none" stroke-linejoin="round"></path><path d="M205 248H518M205 952H322M518 150V1010M722 150V1010M915 952V1010M322 952V1220M1120 952V1220" stroke="#1f2323" stroke-width="14" stroke-dasharray="30 22" fill="none"></path><path d="M235 300V900" stroke="#1f2323" stroke-width="15" fill="none"></path><path d="M203 303.0H267L235 255Z" fill="#1f2323"></path><path d="M203 897.0H267L235 945Z" fill="#1f2323"></path><path d="M570 190H670" stroke="#1f2323" stroke-width="15" fill="none"></path><path d="M570.0 158V222L525 190Z" fill="#1f2323"></path><path d="M670.0 158V222L715 190Z" fill="#1f2323"></path><path d="M375 997H465" stroke="#1f2323" stroke-width="15" fill="none"></path><path d="M373.0 965V1029L328 997Z" fill="#1f2323"></path><path d="M467.0 965V1029L512 997Z" fill="#1f2323"></path><path d="M775 997H860" stroke="#1f2323" stroke-width="15" fill="none"></path><path d="M773.0 965V1029L728 997Z" fill="#1f2323"></path><path d="M864.0 965V1029L909 997Z" fill="#1f2323"></path><path d="M375 1170H1065" stroke="#1f2323" stroke-width="15" fill="none"></path><path d="M373.0 1138V1202L328 1170Z" fill="#1f2323"></path><path d="M1069.0 1138V1202L1114 1170Z" fill="#1f2323"></path><text x="540" y="135" font-family="Liberation Sans" font-size="88" font-weight="bold" fill="#1f2323" lengthAdjust="spacingAndGlyphs" textLength="150">PW</text><text x="80" y="640" font-family="Liberation Sans" font-size="88" font-weight="bold" fill="#1f2323" lengthAdjust="spacingAndGlyphs" textLength="115">Y2</text><text x="365" y="1120" font-family="Liberation Sans" font-size="88" font-weight="bold" fill="#1f2323" lengthAdjust="spacingAndGlyphs" textLength="115">TR</text><text x="770" y="1120" font-family="Liberation Sans" font-size="88" font-weight="bold" fill="#1f2323" lengthAdjust="spacingAndGlyphs" textLength="100">TF</text><text x="635" y="1265" font-family="Liberation Sans" font-size="88" font-weight="bold" fill="#1f2323" lengthAdjust="spacingAndGlyphs" textLength="165">PER</text></svg>
<svg style="left:1262px;top:1265px" width="13" height="6" viewBox="0 0 13 6"><path d="M0 0L6.5 6L13 0Z" fill="#4a5252"></path></svg>
<div class="a bd" style="left:450px;top:1289px;width:828px;height:2px"></div>
<div class="a" style="left:1047px;top:1303px;width:225px;height:42px;background:#00605f;border-radius:10px"></div>
<div class="a" style="left:1227px;top:1306px;width:2px;height:36px;background:#fff"></div>
<div class="t " style="left: 1088px; top: 1313.6px; color: rgb(255, 255, 255); letter-spacing: 0.62px;">Рассчитать</div>
<svg style="left:1244.5px;top:1320px" width="13" height="8" viewBox="0 0 13 8"><path d="M1 1L6.5 6.5L12 1" fill="none" stroke="#fff" stroke-width="1.5"></path></svg>
<!--MIDEND-->

<!--TABSTART-->
<!-- ============ TABLE ============ -->
<div class="a" style="left:1290px;top:155px;width:876px;height:1196px;border:2px solid #c3d0d0"></div>
<div class="a gray" style="left:1292px;top:157px;width:872px;height:42px"></div>
<div class="a bd" style="left:1292px;top:199px;width:872px;height:2px"></div>
<div class="a bd" style="left:1412px;top:157px;width:2px;height:44px"></div>
<div class="a" style="left:1414px;top:157px;width:101px;height:44px;background:#fff"></div>
<div class="a bd" style="left:1515px;top:157px;width:2px;height:44px"></div>
<svg style="left:1319px;top:169px" width="20" height="20" viewBox="0 0 20 20"><rect x="0.9" y="0.9" width="18.2" height="18.2" rx="3" fill="#fff" stroke="#4b63d3" stroke-width="1.7"></rect><path d="M1 5.5H19M1 10H19M1 14.5H19M7 1V19M13 1V19" stroke="#4b63d3" stroke-width="1.7"></path></svg>
<div class="t" style="left:1351px;top:169.8px;color:#434a4a">U<span style="font-size:12.2px;position:relative;top:3px;left:1px">NEXT</span></div>
<svg style="left:1427px;top:168px" width="20" height="20" viewBox="0 0 20 20"><rect x="0.9" y="0.9" width="18.2" height="18.2" rx="3" fill="#fff" stroke="#4b63d3" stroke-width="1.7"></rect><path d="M1 5.5H19M1 10H19M1 14.5H19M7 1V19M13 1V19" stroke="#4b63d3" stroke-width="1.7"></path></svg>
<div class="t" style="left:1459px;top:168.8px;color:#333838">U<span style="font-size:12.2px;position:relative;top:3px;left:1px">FEXT</span></div>
<div class="t b" style="left: 1301.5px; top: 213px; color: rgb(46, 52, 52); letter-spacing: -0.15px;">Время</div>
<svg style="left:1365px;top:215px" width="18" height="18" viewBox="0 0 18 18"><circle cx="9" cy="9" r="9" fill="#939c9c"></circle><circle cx="9" cy="5" r="1.4" fill="#fff"></circle><path d="M9 7.8V14" stroke="#fff" stroke-width="2.2"></path></svg>
<div class="t b" style="left: 1419.5px; top: 213px; color: rgb(46, 52, 52); letter-spacing: 0px;">Zo</div>
<svg style="left:1447px;top:215px" width="18" height="18" viewBox="0 0 18 18"><circle cx="9" cy="9" r="9" fill="#939c9c"></circle><circle cx="9" cy="5" r="1.4" fill="#fff"></circle><path d="M9 7.8V14" stroke="#fff" stroke-width="2.2"></path></svg>
<div class="t b" style="left:1524px;top:213px;color:#2e3434">U<span style="font-size:12.2px;position:relative;top:3px;left:1px;font-weight:normal">FEXT</span><span style="margin-left:3px">4</span></div>
<svg style="left:1587px;top:215px" width="18" height="18" viewBox="0 0 18 18"><circle cx="9" cy="9" r="9" fill="#939c9c"></circle><circle cx="9" cy="5" r="1.4" fill="#fff"></circle><path d="M9 7.8V14" stroke="#fff" stroke-width="2.2"></path></svg>
<div class="a bd" style="left:1292px;top:243px;width:872px;height:2px"></div>
<div class="a gray" style="left:1292px;top:245px;width:99px;height:42px"></div>
<div class="a" style="left:1395px;top:245px;width:751px;height:42px;background:#d8f1f1"></div>
<div class="a bd" style="left:1292px;top:287px;width:854px;height:2px"></div>
<div class="t" style="left: 1367.4px; top: 258px; color: rgb(51, 56, 56); letter-spacing: 0px;">0</div>
<div class="t" style="left: 1407px; top: 258px; color: rgb(51, 56, 56); letter-spacing: 0.4px;">48,6713</div>
<div class="t" style="left: 1507px; top: 258px; color: rgb(51, 56, 56); letter-spacing: 1.14px;">0,0000e+000</div>
<div class="a bd" style="left:1292px;top:331px;width:854px;height:2px"></div>
<div class="t" style="left: 1355.2px; top: 302px; color: rgb(51, 56, 56); letter-spacing: 1.97px;">76</div>
<div class="t" style="left: 1407px; top: 302px; color: rgb(51, 56, 56); letter-spacing: 0.4px;">48,6713</div>
<div class="t" style="left: 1507px; top: 302px; color: rgb(51, 56, 56); letter-spacing: 1.14px;">0,0000e+000</div>
<div class="a bd" style="left:1292px;top:375px;width:854px;height:2px"></div>
<div class="t" style="left: 1346.8px; top: 346px; color: rgb(51, 56, 56); letter-spacing: 0.18px;">152</div>
<div class="t" style="left: 1407px; top: 346px; color: rgb(51, 56, 56); letter-spacing: 0.4px;">48,6713</div>
<div class="t" style="left: 1507px; top: 346px; color: rgb(51, 56, 56); letter-spacing: 1.14px;">0,0000e+000</div>
<div class="a bd" style="left:1292px;top:419px;width:854px;height:2px"></div>
<div class="t" style="left: 1348.3px; top: 390px; color: rgb(51, 56, 56); letter-spacing: -0.52px;">177</div>
<div class="t" style="left: 1407px; top: 390px; color: rgb(51, 56, 56); letter-spacing: 0.4px;">48,6713</div>
<div class="t" style="left: 1504.7px; top: 390px; color: rgb(51, 56, 56); letter-spacing: 1.03px;">-5,9548e-001</div>
<div class="a bd" style="left:1292px;top:463px;width:854px;height:2px"></div>
<div class="t" style="left: 1344.5px; top: 434px; color: rgb(51, 56, 56); letter-spacing: 1.33px;">202</div>
<div class="t" style="left: 1407px; top: 434px; color: rgb(51, 56, 56); letter-spacing: 0.4px;">48,6713</div>
<div class="t" style="left: 1507.8px; top: 434px; color: rgb(51, 56, 56); letter-spacing: 0.75px;">-3,8169e-001</div>
<div class="a bd" style="left:1292px;top:507px;width:854px;height:2px"></div>
<div class="t" style="left: 1345.7px; top: 478px; color: rgb(51, 56, 56); letter-spacing: 0.73px;">227</div>
<div class="t" style="left: 1407px; top: 478px; color: rgb(51, 56, 56); letter-spacing: 0.4px;">48,6713</div>
<div class="t" style="left: 1504.7px; top: 478px; color: rgb(51, 56, 56); letter-spacing: 1.03px;">-5,5636e-001</div>
<div class="a bd" style="left:1292px;top:551px;width:854px;height:2px"></div>
<div class="t" style="left: 1344.5px; top: 522px; color: rgb(51, 56, 56); letter-spacing: 0.73px;">252</div>
<div class="t" style="left: 1407px; top: 522px; color: rgb(51, 56, 56); letter-spacing: 0.4px;">48,6713</div>
<div class="t" style="left: 1506.7px; top: 522px; color: rgb(51, 56, 56); letter-spacing: 0.85px;">-2,7949e-001</div>
<div class="a bd" style="left:1292px;top:595px;width:854px;height:2px"></div>
<div class="t" style="left: 1345.7px; top: 566px; color: rgb(51, 56, 56); letter-spacing: 0.73px;">277</div>
<div class="t" style="left: 1407px; top: 566px; color: rgb(51, 56, 56); letter-spacing: 0.4px;">48,6713</div>
<div class="t" style="left: 1519.2px; top: 566px; color: rgb(51, 56, 56); letter-spacing: 0.29px;">1,1300e-001</div>
<div class="t" style="left: 1344.5px; top: 610px; color: rgb(51, 56, 56); letter-spacing: 1.33px;">302</div>
<div class="t" style="left: 1407px; top: 610px; color: rgb(51, 56, 56); letter-spacing: 0.4px;">48,6713</div>
<div class="t" style="left: 1515.4px; top: 610px; color: rgb(51, 56, 56); letter-spacing: 0.66px;">1,0709e-002</div>
<div class="a bd" style="left:1391px;top:201px;width:4px;height:438px"></div>
<div class="a bd" style="left:1488px;top:201px;width:2px;height:438px"></div>
<div class="a bd" style="left:1637px;top:201px;width:2px;height:438px"></div>
<svg style="left:2149px;top:251px" width="12" height="6" viewBox="0 0 12 6"><path d="M0 6L6 0L12 6Z" fill="#4a5252"></path></svg>
<div class="a" style="left:2150px;top:263px;width:9px;height:39px;background:#bdc6c6;border-radius:5px"></div>
<svg style="left:2149px;top:627px" width="12" height="6" viewBox="0 0 12 6"><path d="M0 0L6 6L12 0Z" fill="#4a5252"></path></svg>
<div class="a bd" style="left:1292px;top:639px;width:872px;height:2px"></div>
<!-- ============ CHART ============ -->
<div class="a gray" style="left:1292px;top:641px;width:872px;height:40px"></div>
<div class="a bd" style="left:1292px;top:681px;width:872px;height:2px"></div>
<div class="a bd" style="left:1304px;top:641px;width:2px;height:42px"></div>
<div class="a" style="left:1306px;top:641px;width:230px;height:42px;background:#fff"></div>
<div class="a bd" style="left:1536px;top:641px;width:2px;height:42px"></div>
<svg style="left:1318px;top:653px" width="24" height="18" viewBox="0 0 24 18"><path d="M0.8 0V17.2H24" fill="none" stroke="#4a5252" stroke-width="1.3"></path><path d="M2 9C3.5 1 5.5 1 7 9C8.5 16 10.5 16 12 9C13.5 2 15.5 2 17 9C18.5 15 20.5 13 23.5 6" fill="none" stroke="#179017" stroke-width="1.6"></path></svg>
<div class="t b" style="left: 1351.5px; top: 652px; color: rgb(31, 35, 35); letter-spacing: 0.32px;">Общие параметры</div>
<svg style="left:1290px;top:640px" width="875" height="710" viewBox="1290 640 875 710"><rect x="1367" y="695" width="784" height="573" fill="#f6f8f8"></rect><rect x="1431.6" y="695" width="152.1" height="573" fill="#003c3c" fill-opacity="0.03"></rect><rect x="1735.8" y="695" width="152.1" height="573" fill="#003c3c" fill-opacity="0.03"></rect><rect x="2040.0" y="695" width="111.0" height="573" fill="#003c3c" fill-opacity="0.03"></rect><rect x="1367" y="808.8" width="784" height="88.2" fill="#003c3c" fill-opacity="0.03"></rect><rect x="1367" y="985.3" width="784" height="88.2" fill="#003c3c" fill-opacity="0.03"></rect><rect x="1367" y="1161.8" width="784" height="88.2" fill="#003c3c" fill-opacity="0.03"></rect><path d="M1393.6 695V1268" stroke="#d8e2e2" stroke-width="1.2"></path><path d="M1431.6 695V1268" stroke="#c8d5d5" stroke-width="1.5"></path><path d="M1469.6 695V1268" stroke="#d8e2e2" stroke-width="1.2"></path><path d="M1507.6 695V1268" stroke="#d8e2e2" stroke-width="1.2"></path><path d="M1545.7 695V1268" stroke="#d8e2e2" stroke-width="1.2"></path><path d="M1583.7 695V1268" stroke="#c8d5d5" stroke-width="1.5"></path><path d="M1621.7 695V1268" stroke="#d8e2e2" stroke-width="1.2"></path><path d="M1659.8 695V1268" stroke="#d8e2e2" stroke-width="1.2"></path><path d="M1697.8 695V1268" stroke="#d8e2e2" stroke-width="1.2"></path><path d="M1735.8 695V1268" stroke="#c8d5d5" stroke-width="1.5"></path><path d="M1773.8 695V1268" stroke="#d8e2e2" stroke-width="1.2"></path><path d="M1811.8 695V1268" stroke="#d8e2e2" stroke-width="1.2"></path><path d="M1849.9 695V1268" stroke="#d8e2e2" stroke-width="1.2"></path><path d="M1887.9 695V1268" stroke="#c8d5d5" stroke-width="1.5"></path><path d="M1925.9 695V1268" stroke="#d8e2e2" stroke-width="1.2"></path><path d="M1963.9 695V1268" stroke="#d8e2e2" stroke-width="1.2"></path><path d="M2002.0 695V1268" stroke="#d8e2e2" stroke-width="1.2"></path><path d="M2040.0 695V1268" stroke="#c8d5d5" stroke-width="1.5"></path><path d="M2078.0 695V1268" stroke="#d8e2e2" stroke-width="1.2"></path><path d="M2116.1 695V1268" stroke="#d8e2e2" stroke-width="1.2"></path><path d="M1367 1250.0H2151" stroke="#c8d5d5" stroke-width="1.5"></path><path d="M1367 1228.0H2151" stroke="#d8e2e2" stroke-width="1.2"></path><path d="M1367 1205.9H2151" stroke="#d8e2e2" stroke-width="1.2"></path><path d="M1367 1183.9H2151" stroke="#d8e2e2" stroke-width="1.2"></path><path d="M1367 1161.8H2151" stroke="#c8d5d5" stroke-width="1.5"></path><path d="M1367 1139.7H2151" stroke="#d8e2e2" stroke-width="1.2"></path><path d="M1367 1117.7H2151" stroke="#d8e2e2" stroke-width="1.2"></path><path d="M1367 1095.6H2151" stroke="#d8e2e2" stroke-width="1.2"></path><path d="M1367 1073.5H2151" stroke="#c8d5d5" stroke-width="1.5"></path><path d="M1367 1051.5H2151" stroke="#d8e2e2" stroke-width="1.2"></path><path d="M1367 1029.4H2151" stroke="#d8e2e2" stroke-width="1.2"></path><path d="M1367 1007.4H2151" stroke="#d8e2e2" stroke-width="1.2"></path><path d="M1367 985.3H2151" stroke="#c8d5d5" stroke-width="1.5"></path><path d="M1367 963.2H2151" stroke="#d8e2e2" stroke-width="1.2"></path><path d="M1367 941.2H2151" stroke="#d8e2e2" stroke-width="1.2"></path><path d="M1367 919.1H2151" stroke="#d8e2e2" stroke-width="1.2"></path><path d="M1367 897.0H2151" stroke="#c8d5d5" stroke-width="1.5"></path><path d="M1367 875.0H2151" stroke="#d8e2e2" stroke-width="1.2"></path><path d="M1367 852.9H2151" stroke="#d8e2e2" stroke-width="1.2"></path><path d="M1367 830.9H2151" stroke="#d8e2e2" stroke-width="1.2"></path><path d="M1367 808.8H2151" stroke="#c8d5d5" stroke-width="1.5"></path><path d="M1367 786.7H2151" stroke="#d8e2e2" stroke-width="1.2"></path><path d="M1367 764.7H2151" stroke="#d8e2e2" stroke-width="1.2"></path><path d="M1367 742.6H2151" stroke="#d8e2e2" stroke-width="1.2"></path><path d="M1367 720.5H2151" stroke="#c8d5d5" stroke-width="1.5"></path><path d="M1367 698.5H2151" stroke="#d8e2e2" stroke-width="1.2"></path><path d="M1367 695H2151" stroke="#d8e2e2" stroke-width="1.2"></path><path d="M1366.7 694V1268.7H2151" fill="none" stroke="#3e4a4a" stroke-width="1.7"></path><path d="M1358.5 1250.0H1367" stroke="#3e4a4a" stroke-width="1.6"></path><path d="M1362.5 1228.0H1367" stroke="#3e4a4a" stroke-width="1.6"></path><path d="M1362.5 1205.9H1367" stroke="#3e4a4a" stroke-width="1.6"></path><path d="M1362.5 1183.9H1367" stroke="#3e4a4a" stroke-width="1.6"></path><path d="M1358.5 1161.8H1367" stroke="#3e4a4a" stroke-width="1.6"></path><path d="M1362.5 1139.7H1367" stroke="#3e4a4a" stroke-width="1.6"></path><path d="M1362.5 1117.7H1367" stroke="#3e4a4a" stroke-width="1.6"></path><path d="M1362.5 1095.6H1367" stroke="#3e4a4a" stroke-width="1.6"></path><path d="M1358.5 1073.5H1367" stroke="#3e4a4a" stroke-width="1.6"></path><path d="M1362.5 1051.5H1367" stroke="#3e4a4a" stroke-width="1.6"></path><path d="M1362.5 1029.4H1367" stroke="#3e4a4a" stroke-width="1.6"></path><path d="M1362.5 1007.4H1367" stroke="#3e4a4a" stroke-width="1.6"></path><path d="M1358.5 985.3H1367" stroke="#3e4a4a" stroke-width="1.6"></path><path d="M1362.5 963.2H1367" stroke="#3e4a4a" stroke-width="1.6"></path><path d="M1362.5 941.2H1367" stroke="#3e4a4a" stroke-width="1.6"></path><path d="M1362.5 919.1H1367" stroke="#3e4a4a" stroke-width="1.6"></path><path d="M1358.5 897.0H1367" stroke="#3e4a4a" stroke-width="1.6"></path><path d="M1362.5 875.0H1367" stroke="#3e4a4a" stroke-width="1.6"></path><path d="M1362.5 852.9H1367" stroke="#3e4a4a" stroke-width="1.6"></path><path d="M1362.5 830.9H1367" stroke="#3e4a4a" stroke-width="1.6"></path><path d="M1358.5 808.8H1367" stroke="#3e4a4a" stroke-width="1.6"></path><path d="M1362.5 786.7H1367" stroke="#3e4a4a" stroke-width="1.6"></path><path d="M1362.5 764.7H1367" stroke="#3e4a4a" stroke-width="1.6"></path><path d="M1362.5 742.6H1367" stroke="#3e4a4a" stroke-width="1.6"></path><path d="M1358.5 720.5H1367" stroke="#3e4a4a" stroke-width="1.6"></path><path d="M1362.5 698.5H1367" stroke="#3e4a4a" stroke-width="1.6"></path><path d="M1393.6 1268V1271.5" stroke="#3e4a4a" stroke-width="1.6"></path><path d="M1431.6 1268V1276.5" stroke="#3e4a4a" stroke-width="1.6"></path><path d="M1469.6 1268V1271.5" stroke="#3e4a4a" stroke-width="1.6"></path><path d="M1507.6 1268V1271.5" stroke="#3e4a4a" stroke-width="1.6"></path><path d="M1545.7 1268V1271.5" stroke="#3e4a4a" stroke-width="1.6"></path><path d="M1583.7 1268V1276.5" stroke="#3e4a4a" stroke-width="1.6"></path><path d="M1621.7 1268V1271.5" stroke="#3e4a4a" stroke-width="1.6"></path><path d="M1659.8 1268V1271.5" stroke="#3e4a4a" stroke-width="1.6"></path><path d="M1697.8 1268V1271.5" stroke="#3e4a4a" stroke-width="1.6"></path><path d="M1735.8 1268V1276.5" stroke="#3e4a4a" stroke-width="1.6"></path><path d="M1773.8 1268V1271.5" stroke="#3e4a4a" stroke-width="1.6"></path><path d="M1811.8 1268V1271.5" stroke="#3e4a4a" stroke-width="1.6"></path><path d="M1849.9 1268V1271.5" stroke="#3e4a4a" stroke-width="1.6"></path><path d="M1887.9 1268V1276.5" stroke="#3e4a4a" stroke-width="1.6"></path><path d="M1925.9 1268V1271.5" stroke="#3e4a4a" stroke-width="1.6"></path><path d="M1963.9 1268V1271.5" stroke="#3e4a4a" stroke-width="1.6"></path><path d="M2002.0 1268V1271.5" stroke="#3e4a4a" stroke-width="1.6"></path><path d="M2040.0 1268V1276.5" stroke="#3e4a4a" stroke-width="1.6"></path><path d="M2078.0 1268V1271.5" stroke="#3e4a4a" stroke-width="1.6"></path><path d="M2116.1 1268V1271.5" stroke="#3e4a4a" stroke-width="1.6"></path><path d="M1431.6 1161.9 L1447.9 1123.3 L1462.0 1082.6 L1516.4 1082.6 L1522.8 1083.9 L1530.6 1096.8 L1537.8 1114.8 L1545.1 1137.5 L1553.7 1153.3 L1561.4 1179.0 L1568.7 1200.5 L1576.4 1219.7 L1582.8 1239.0 L1591.4 1240.3 L1629.1 1240.3 L1637.7 1242.0 L1645.0 1239.0 L1652.7 1227.5 L1660.0 1206.9 L1667.3 1187.6 L1675.0 1170.5 L1682.3 1163.2 L1690.0 1161.9 L1735.4 1161.9 L1751.7 1123.3 L1765.8 1082.6 L1820.3 1082.6 L1826.7 1083.9 L1834.4 1096.8 L1841.7 1114.8 L1849.0 1137.5 L1857.5 1153.3 L1865.2 1179.0 L1872.5 1200.5 L1880.2 1219.7 L1886.7 1239.0 L1895.2 1240.3 L1933.0 1240.3 L1941.5 1242.0 L1948.8 1239.0 L1956.5 1227.5 L1963.8 1206.9 L1971.1 1187.6 L1978.8 1170.5 L1986.1 1163.2 L1993.8 1161.9 L2038.4 1161.9" fill="none" stroke="#dac473" stroke-width="1.5" stroke-linejoin="round"></path><path d="M1431.6 1161.9 L1462.0 720.5 L1553.7 720.5 L1582.8 1161.9 L1735.4 1161.9 L1765.8 720.5 L1857.5 720.5 L1887.1 1161.9 L2038.4 1161.9" fill="none" stroke="#1aa3ff" stroke-width="1.5" stroke-linejoin="round"></path><path d="M1431.6 1161.9 L1477.8 1161.9 L1485.1 1214.2 L1493.3 1196.2 L1501.4 1212.0 L1508.7 1187.6 L1516.4 1152.5 L1523.7 1161.9 L1531.4 1156.8 L1539.1 1159.8 L1546.8 1158.5 L1554.1 1159.8 L1561.4 1159.8 L1569.1 1159.8 L1576.4 1162.8 L1583.7 1160.6 L1592.3 1167.0 L1599.1 1152.5 L1607.3 1109.2 L1614.6 1128.5 L1622.3 1112.6 L1630.0 1137.5 L1637.3 1170.5 L1645.0 1161.9 L1652.7 1166.2 L1660.0 1163.6 L1667.7 1166.2 L1675.0 1164.9 L1682.3 1166.2 L1690.0 1164.9 L1697.3 1163.6 L1705.0 1163.6 L1712.3 1162.8 L1720.0 1161.9 L1727.3 1162.8 L1735.4 1162.8 L1742.7 1161.0 L1750.8 1162.8 L1758.5 1160.6 L1766.3 1163.6 L1774.4 1158.5 L1782.1 1172.6 L1789.4 1214.2 L1797.5 1196.2 L1804.8 1212.0 L1812.5 1187.6 L1819.8 1152.5 L1827.5 1161.9 L1835.3 1156.8 L1843.0 1159.8 L1850.7 1158.5 L1858.0 1159.8 L1865.7 1159.8 L1873.0 1159.8 L1880.2 1162.8 L1887.5 1160.6 L1895.7 1166.2 L1903.4 1152.5 L1911.5 1109.2 L1918.4 1128.5 L1926.5 1112.6 L1934.2 1137.5 L1941.5 1170.5 L1949.2 1161.9 L1956.5 1166.2 L1964.2 1163.6 L1972.0 1165.3 L1979.2 1164.9 L1987.0 1165.8 L1994.2 1163.6 L2002.0 1163.6 L2009.2 1162.8 L2017.0 1162.3 L2024.2 1161.9 L2032.0 1162.8 L2039.2 1161.9 L2047.0 1162.8 L2054.2 1161.9 L2061.9 1162.8 L2069.2 1161.0 L2076.9 1164.5 L2084.2 1158.5" fill="none" stroke="#e04712" stroke-width="1.5" stroke-linejoin="round"></path></svg>
<div class="t" style="left:1290px;width:60px;text-align:right;top:1241.3px;font-size:17px;color:#465050">-1</div>
<div class="t" style="left:1290px;width:60px;text-align:right;top:1153.1px;font-size:17px;color:#465050">0</div>
<div class="t" style="left:1290px;width:60px;text-align:right;top:1064.8px;font-size:17px;color:#465050">1</div>
<div class="t" style="left:1290px;width:60px;text-align:right;top:976.6px;font-size:17px;color:#465050">2</div>
<div class="t" style="left:1290px;width:60px;text-align:right;top:888.3px;font-size:17px;color:#465050">3</div>
<div class="t" style="left:1290px;width:60px;text-align:right;top:800.1px;font-size:17px;color:#465050">4</div>
<div class="t" style="left:1290px;width:60px;text-align:right;top:711.8px;font-size:17px;color:#465050">5</div>
<div class="t" style="left:1391.6px;width:80px;text-align:center;top:1287px;font-size:17px;color:#465050">0</div>
<div class="t" style="left:1543.7px;width:80px;text-align:center;top:1287px;font-size:17px;color:#465050">500</div>
<div class="t" style="left:1695.8px;width:80px;text-align:center;top:1287px;font-size:17px;color:#465050">1000</div>
<div class="t" style="left:1847.9px;width:80px;text-align:center;top:1287px;font-size:17px;color:#465050">1500</div>
<div class="t" style="left:2000.0px;width:80px;text-align:center;top:1287px;font-size:17px;color:#465050">2000</div>
<div class="t" style="left: 1716px; top: 1316px; font-size: 17px; color: rgb(70, 80, 80); letter-spacing: 0.12px;">Время (пс)</div>
<div class="t" style="left:1297px;top:973px;font-size:17px;color:#465050;transform:rotate(-90deg);transform-origin:center">U (B)</div>
<!--TABEND-->

<!--CHART-->

<!--RIGHTSTART-->
<!-- ============ RIGHT ============ -->
<div class="a" style="left:2164px;top:155px;width:378px;height:1196px;border:2px solid #c3d0d0"></div>
<div class="t " style="left: 2188.5px; top: 174.7px; color: rgb(46, 51, 51); letter-spacing: 0.62px;">Результаты расчета</div>
<svg style="left:2507px;top:175px" width="17" height="18" viewBox="12 9.5 17 18"><path d="M13 12L25.5 24.5" stroke="#465050" stroke-width="1.4"></path><path d="M19 10.3L26.8 14.5L22.6 17.8L18.6 14Z" fill="#465050" stroke="#465050" stroke-width="0.6" stroke-linejoin="round"></path><path d="M14.5 18L18.5 21.3M18 21L15 26" stroke="#465050" stroke-width="1.5"></path></svg>
<div class="a" style="left:2172px;top:214px;width:93px;height:40px;background:#eff1f1;border-radius:9px"></div>
<div class="a" style="left:2172px;top:255px;width:115px;height:41px;background:#eff1f1;border-radius:9px"></div>
<div class="t " style="left: 2190px; top: 224.5px; color: rgb(180, 187, 187); letter-spacing: 0.59px;">Export</div>
<div class="t " style="left: 2190px; top: 265.8px; color: rgb(180, 187, 187); letter-spacing: 0.49px;">ExportLC</div>
<div class="t b" style="left: 2189.5px; top: 307px; color: rgb(31, 35, 35); letter-spacing: -0.03px;">Таблицы</div>
<svg style="left:2191px;top:349.5px" width="24" height="24" viewBox="0 0 24 24"><rect width="24" height="24" rx="4" fill="#005e5e"></rect><path d="M5 12.5L10 17.5L19.5 6.5" fill="none" stroke="#fff" stroke-width="2"></path></svg>
<div class="t" style="left:2225.5px;top:351.5px;color:#2e3333">U<span style="font-size:12.2px;position:relative;top:3px;left:1px">NEXT</span></div>
<svg style="left:2191px;top:395px" width="24" height="24" viewBox="0 0 24 24"><rect width="24" height="24" rx="4" fill="#005e5e"></rect><path d="M5 12.5L10 17.5L19.5 6.5" fill="none" stroke="#fff" stroke-width="2"></path></svg>
<div class="t" style="left:2225.5px;top:397px;color:#2e3333">U<span style="font-size:12.2px;position:relative;top:3px;left:1px">FEXT</span></div>
<div class="t b" style="left: 2189.5px; top: 441px; color: rgb(31, 35, 35); letter-spacing: -0.07px;">Графики</div>
<div class="a" style="left:2175px;top:474px;width:357px;height:42px;background:#b6d8d6;border-radius:9px"></div>
<svg style="left:2191px;top:483px" width="24" height="24" viewBox="0 0 24 24"><rect width="24" height="24" rx="4" fill="#005e5e"></rect><path d="M5 12.5L10 17.5L19.5 6.5" fill="none" stroke="#fff" stroke-width="2"></path></svg>
<div class="t " style="left: 2225.5px; top: 486.3px; color: rgb(46, 51, 51); letter-spacing: 0.57px;">Общие параметры</div>
<div class="t b" style="left: 2189.5px; top: 544.6px; color: rgb(58, 64, 64); letter-spacing: 0.27px;">Настройки отображения</div>
<div class="t b" style="left: 2189.5px; top: 566.2px; color: rgb(58, 64, 64); letter-spacing: 0.03px;">результатов</div>
<div class="a bd" style="left:2175px;top:590px;width:357px;height:2px"></div>
<div class="t " style="left: 2184.5px; top: 613px; color: rgb(46, 51, 51); letter-spacing: 0.28px;">По оси X</div>
<div class="t " style="left: 2184.5px; top: 663px; color: rgb(46, 51, 51); letter-spacing: 0.28px;">По оси Y</div>
<div class="t " style="left: 2184.5px; top: 713px; color: rgb(46, 51, 51); letter-spacing: 0.56px;">Порт</div>
<div class="a" style="left:2274px;top:601px;width:243px;height:42px;background:#f0f1f1;border-radius:10px"></div>
<div class="t " style="left: 2286px; top: 612.8px; color: rgb(180, 187, 187); letter-spacing: 0.46px;">Время</div>
<svg style="left:2489.5px;top:617.5px" width="13" height="8" viewBox="0 0 13 8"><path d="M1 1L6.5 6.5L12 1" fill="none" stroke="#3e4646" stroke-width="1.5"></path></svg>
<div class="a" style="left:2274px;top:651px;width:243px;height:42px;background:#f0f1f1;border-radius:10px"></div>
<div class="t " style="left:2286px;top:662.8px;color:#b4bbbb">U</div>
<svg style="left:2489.5px;top:667.5px" width="13" height="8" viewBox="0 0 13 8"><path d="M1 1L6.5 6.5L12 1" fill="none" stroke="#3e4646" stroke-width="1.5"></path></svg>
<div class="dd" style="left:2274px;top:701px;width:243px;height:42px;border-radius:10px"></div>
<div class="t " style="left: 2286px; top: 712.8px; color: rgb(46, 51, 51); letter-spacing: -0.01px;">1;3;4</div>
<svg style="left:2489.5px;top:717.5px" width="13" height="8" viewBox="0 0 13 8"><path d="M1 1L6.5 6.5L12 1" fill="none" stroke="#3e4646" stroke-width="1.5"></path></svg>
<div class="t b" style="left: 2189px; top: 774px; color: rgb(58, 64, 64); letter-spacing: 0.34px;">Легенда</div>
<div class="a bd" style="left:2175px;top:797px;width:357px;height:2px"></div>
<div class="t " style="left:2184.5px;top:820.5px;color:#2e3333">1</div>
<div class="dd" style="left:2274px;top:808.5px;width:243px;height:41px;border-radius:10px"></div>
<div class="a" style="left:2286px;top:817.5px;width:24px;height:24px;background:#00a0ff;border:2px solid #c3cccc;border-radius:5px"></div>
<div class="t " style="left: 2322px; top: 820.5px; color: rgb(46, 51, 51); letter-spacing: 0.37px;">#FF00A0FF</div>
<svg style="left:2489.5px;top:825.0px" width="13" height="8" viewBox="0 0 13 8"><path d="M1 1L6.5 6.5L12 1" fill="none" stroke="#3e4646" stroke-width="1.5"></path></svg>
<div class="t " style="left:2184.5px;top:870.5px;color:#2e3333">3</div>
<div class="dd" style="left:2274px;top:858.5px;width:243px;height:41px;border-radius:10px"></div>
<div class="a" style="left:2286px;top:867.5px;width:24px;height:24px;background:#dac473;border:2px solid #c3cccc;border-radius:5px"></div>
<div class="t " style="left: 2322px; top: 870.5px; color: rgb(46, 51, 51); letter-spacing: -0.26px;">#FFDAC473</div>
<svg style="left:2489.5px;top:875.0px" width="13" height="8" viewBox="0 0 13 8"><path d="M1 1L6.5 6.5L12 1" fill="none" stroke="#3e4646" stroke-width="1.5"></path></svg>
<div class="t " style="left:2184.5px;top:920.5px;color:#2e3333">4</div>
<div class="dd" style="left:2274px;top:908.5px;width:243px;height:41px;border-radius:10px"></div>
<div class="a" style="left:2286px;top:917.5px;width:24px;height:24px;background:#e04712;border:2px solid #c3cccc;border-radius:5px"></div>
<div class="t " style="left: 2322px; top: 920.5px; color: rgb(46, 51, 51); letter-spacing: -0.32px;">#FFE04712</div>
<svg style="left:2489.5px;top:925.0px" width="13" height="8" viewBox="0 0 13 8"><path d="M1 1L6.5 6.5L12 1" fill="none" stroke="#3e4646" stroke-width="1.5"></path></svg>
<!--RIGHTEND-->


</body></html>
